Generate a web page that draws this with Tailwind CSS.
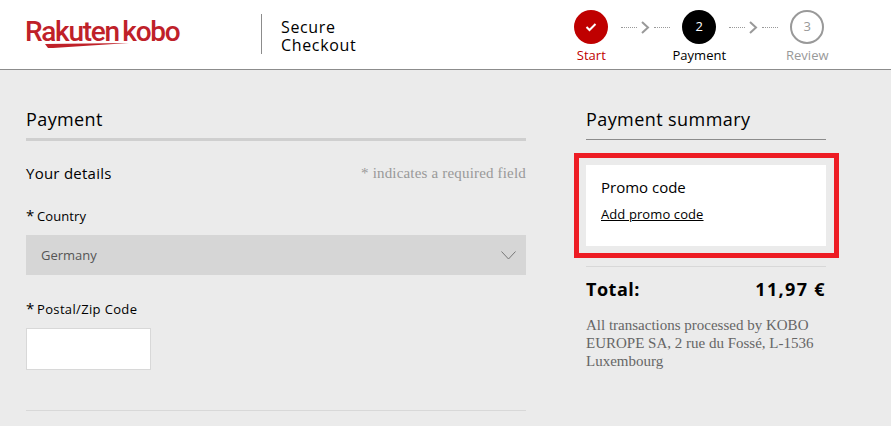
<!DOCTYPE html>
<html><head><meta charset="utf-8"><script src="https://cdn.jsdelivr.net/npm/@tailwindcss/browser@4"></script></head>
<body class="m-0 bg-[#ebebeb] overflow-hidden font-['Open_Sans',sans-serif] text-black">
<div class="w-[891px] h-[426px] overflow-hidden">
<header class="h-[70px] bg-white border-b border-[#8c8c8c] flex items-start">
  <div class="relative w-[158px] h-[69px] ml-[25px] mr-[1px] shrink-0">
    <div class="pt-[13px] text-[28px] leading-[38px] font-medium tracking-[-1.3px] text-[#bf2129] whitespace-nowrap font-['Roboto',sans-serif] [word-spacing:-2px]">Rakuten kobo</div>
    <svg class="absolute left-[20px] top-[43px]" width="84" height="6" viewBox="0 0 84 6"><path d="M0 1 L84 0 L8 5 L3 5 Z" fill="#bf2129"/></svg>
  </div>
  <div class="ml-[77px] mt-[14px] w-px h-[40px] bg-[#8c8c8c]"></div>
  <div class="ml-[19px] mt-[18px] text-[16px] leading-[18px] tracking-[0.65px] text-black">Secure<br>Checkout</div>
  <div class="ml-[210px] mt-[10px] flex items-start">
    <div class="w-[50px] flex flex-col items-center">
      <div class="w-[34px] h-[34px] rounded-full bg-[#bf0000] flex items-center justify-center"><svg width="12" height="10" viewBox="0 0 12 10"><path d="M1.5 5 L4.5 8 L10.5 2" fill="none" stroke="#fff" stroke-width="2"/></svg></div>
      <div class="text-[13px] leading-[18px] mt-[2px] text-[#bf0000]">Start</div>
    </div>
    <div class="w-[58px] h-[34px] flex items-center justify-center gap-[4px]">
      <span class="w-[16px] border-t border-dotted border-[#999]"></span>
      <svg width="9" height="13" viewBox="0 0 9 13"><path d="M1 1 L7 6.5 L1 12" fill="none" stroke="#999" stroke-width="2"/></svg>
      <span class="w-[16px] border-t border-dotted border-[#999]"></span>
    </div>
    <div class="w-[50px] flex flex-col items-center">
      <div class="w-[34px] h-[34px] rounded-full bg-black text-white text-[13px] flex items-center justify-center">2</div>
      <div class="text-[13px] leading-[18px] mt-[2px] whitespace-nowrap">Payment</div>
    </div>
    <div class="w-[58px] h-[34px] flex items-center justify-center gap-[4px]">
      <span class="w-[16px] border-t border-dotted border-[#999]"></span>
      <svg width="9" height="13" viewBox="0 0 9 13"><path d="M1 1 L7 6.5 L1 12" fill="none" stroke="#999" stroke-width="2"/></svg>
      <span class="w-[16px] border-t border-dotted border-[#999]"></span>
    </div>
    <div class="w-[50px] flex flex-col items-center">
      <div class="w-[34px] h-[34px] rounded-full border-2 border-[#999] text-[#999] text-[13px] flex items-center justify-center">3</div>
      <div class="text-[13px] leading-[18px] mt-[2px] text-[#999]">Review</div>
    </div>
  </div>
</header>
<main class="flex pl-[26px] gap-[60px]">
  <section class="w-[500px] shrink-0">
    <h2 class="pt-[36px] h-[71px] text-[18px] leading-[26px] border-b-[3px] border-[#cfcfcf] tracking-[0.4px]">Payment</h2>
    <div class="mt-[21px] flex justify-between items-center h-[22px]">
      <span class="text-[15px] tracking-[0.25px]">Your details</span>
      <span class="text-[#999] text-[15px] tracking-[0.18px] font-['Liberation_Serif',serif]">* indicates a required field</span>
    </div>
    <label class="block mt-[22px] text-[13px] leading-[20px] tracking-[0.1px]"><span class="inline-block w-[11px] text-[15px] leading-[14px]">*</span>Country</label>
    <div class="mt-[9px] h-[40px] bg-[#d6d6d6] flex items-center justify-between pl-[15px] pr-[10px] pt-[1px] text-[13px] text-[#555]">
      <span>Germany</span>
      <svg width="15" height="9" viewBox="0 0 15 9"><path d="M0.5 0.5 L7.5 8 L14.5 0.5" fill="none" stroke="#777" stroke-width="1"/></svg>
    </div>
    <label class="block mt-[24px] text-[13px] leading-[20px] tracking-[0.35px]"><span class="inline-block w-[11px] text-[15px] leading-[14px]">*</span>Postal/Zip Code</label>
    <div class="mt-[9px] w-[125px] h-[42px] bg-white border border-[#d8d8d8]"></div>
    <div class="mt-[40px] border-t border-[#d8d8d8]"></div>
  </section>
  <aside class="w-[240px] shrink-0">
    <h2 class="pt-[36px] h-[70px] text-[18px] leading-[26px] border-b border-[#8c8c8c] tracking-[0.42px]">Payment summary</h2>
    <div class="mt-[13px] -ml-[12px] w-[265px] h-[105px] border-[5px] border-[#ed1c24] pl-[7px] pt-[7px]">
      <div class="w-[240px] h-[81px] bg-white px-[15px] pt-[12px]">
        <div class="text-[15px] leading-[20px]">Promo code</div>
        <a class="block mt-[8px] text-[13px] leading-[18px] underline tracking-[0.1px]">Add promo code</a>
      </div>
    </div>
    <div class="mt-[8px] border-t border-[#d8d8d8] pt-[9px] flex justify-between text-[18px] leading-[26px] font-bold tracking-[0.5px]"><span>Total:</span><span class="tracking-[1.35px]">11,97 €</span></div>
    <p class="mt-[14px] text-[15px] leading-[18px] text-[#666] font-['Liberation_Serif',serif]">All transactions processed by KOBO EUROPE SA, 2 rue du Fossé, L-1536 Luxembourg</p>
  </aside>
</main>
</div>
</body></html>
